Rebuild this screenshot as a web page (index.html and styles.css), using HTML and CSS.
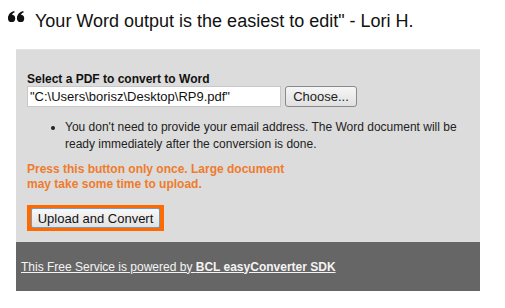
FILE: index.html
```html
<!DOCTYPE html>
<html lang="en">
<head>
  <meta charset="UTF-8" />
  <title>PDF to Word</title>
  <link rel="stylesheet" href="styles.css">
</head>
<body>
  <div class="quote">
    <svg class="quote-mark" width="17" height="11" viewBox="0 0 17 11" aria-hidden="true">
      <circle cx="3.6" cy="7.4" r="3.6" fill="#111"/>
      <path d="M0.1 7.2 C0.1 3.6 2.4 1 6.2 0 L6.7 1.3 C4.6 2.2 3.6 3.8 3.8 5.2 Z" fill="#111"/>
      <circle cx="12.6" cy="7.4" r="3.6" fill="#111"/>
      <path d="M9.1 7.2 C9.1 3.6 11.4 1 15.2 0 L15.7 1.3 C13.6 2.2 12.6 3.8 12.8 5.2 Z" fill="#111"/>
    </svg>
    <span class="quote-text">Your Word output is the easiest to edit" - Lori H.</span>
  </div>

  <div class="panel">
    <form class="upload-form">
      <label for="pdfFile">Select a PDF to convert to Word</label>
      <div class="file-row">
        <input id="pdfFile" class="file-path" value="&quot;C:\Users\borisz\Desktop\RP9.pdf&quot;" readonly />
        <button type="button" class="choose">Choose...</button>
      </div>
      <ul class="notes">
        <li>You don't need to provide your email address. The Word document will be ready immediately after the conversion is done.</li>
      </ul>
      <p class="warning">Press this button only once. Large document<br>may take some time to upload.</p>
      <div class="submit-wrap">
        <button type="button" class="submit">Upload and Convert</button>
      </div>
    </form>
    <div class="footer">
      <a href="#">This Free Service is powered by <b>BCL easyConverter SDK</b></a>
    </div>
  </div>
</body>
</html>
```

FILE: styles.css
```css
body {
  margin: 0;
  background: #fff;
  font-family: "Liberation Sans", Arial, sans-serif;
  color: #111;
}

.quote {
  display: flex;
  align-items: flex-start;
  height: 49px;
  padding-left: 8px;
  box-sizing: border-box;
}

.quote-mark {
  margin-top: 11px;
  margin-right: 10px;
  flex: none;
}

.quote-text {
  font-size: 18px;
  line-height: 20px;
  margin-top: 11px;
}

.panel {
  width: 464px;
  margin-left: 16px;
  background: #dcdcdc;
  border-top: 1px solid #e4e4e4;
}

.upload-form {
  display: flex;
  flex-direction: column;
  align-items: flex-start;
  padding: 22px 11px 11px;
  font-size: 12px;
}

label {
  display: block;
  font-weight: bold;
  line-height: 14px;
}

.file-row {
  display: flex;
  gap: 4px;
}

.file-path {
  width: 254px;
  height: 21px;
  box-sizing: border-box;
  border: 1px solid #c8c8c8;
  background: #fff;
  font-family: inherit;
  font-size: 13px;
  padding: 0 2px;
  color: #111;
}

.choose {
  width: 72px;
  height: 21px;
  border: 1px solid #8a8a8a;
  border-radius: 3px;
  background: linear-gradient(#f6f6f6, #e0e0e0);
  font-family: inherit;
  font-size: 13px;
  color: #222;
  padding: 0;
}

.notes {
  margin: 12px 0 0;
  padding-left: 38px;
  line-height: 17px;
  font-size: 12px;
  color: #222;
}

.warning {
  margin: 9px 0 0;
  color: #ef7b2c;
  font-weight: bold;
  line-height: 15px;
}

.submit-wrap {
  margin-top: 13px;
  padding: 3px 4px;
  background: #ff6a00;
}

.submit {
  display: block;
  width: 129px;
  height: 20px;
  border: 1px solid #7a9ab8;
  border-radius: 2px;
  background: linear-gradient(#f8f8f8, #e2e2e2);
  font-family: inherit;
  font-size: 13px;
  color: #111;
  padding: 0;
}

.footer {
  background: #666;
  height: 49px;
  display: flex;
  align-items: center;
  padding-left: 5px;
  font-size: 12px;
}

.footer a {
  color: #f4f4f4;
  text-decoration: underline;
}
```
